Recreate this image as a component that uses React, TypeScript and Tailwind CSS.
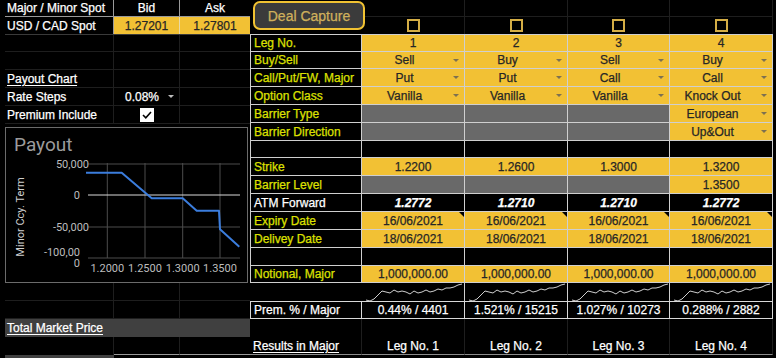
import React from 'react';

type Kind = 'y' | 'g' | 'b' | 'bi';
interface Cell {
    t?: string;
    k: Kind;
    dd?: boolean;
    corner?: boolean;
}
interface Row {
    label: string;
    white?: boolean;
    h: string;
    cells: Cell[];
}

const y = (t: string, dd = false, corner = false): Cell => ({ t, k: 'y', dd, corner });
const g: Cell = { k: 'g' };
const b: Cell = { k: 'b' };

const rows: Row[] = [
    { label: 'Leg No.', h: 'h-[18px]', cells: ['1', '2', '3', '4'].map((t) => y(t)) },
    { label: 'Buy/Sell', h: 'h-[17px]', cells: ['Sell', 'Buy', 'Sell', 'Buy'].map((t) => y(t, true)) },
    { label: 'Call/Put/FW, Major', h: 'h-[18px]', cells: ['Put', 'Put', 'Call', 'Call'].map((t) => y(t, true)) },
    { label: 'Option Class', h: 'h-[18px]', cells: ['Vanilla', 'Vanilla', 'Vanilla', 'Knock Out'].map((t) => y(t, true)) },
    { label: 'Barrier Type', h: 'h-[18px]', cells: [g, g, g, y('European', true)] },
    { label: 'Barrier Direction', h: 'h-[18px]', cells: [g, g, g, y('Up&Out', true)] },
    { label: '', h: 'h-[17px]', cells: [b, b, b, b] },
    { label: 'Strike', h: 'h-[18px]', cells: ['1.2200', '1.2600', '1.3000', '1.3200'].map((t) => y(t)) },
    { label: 'Barrier Level', h: 'h-[18px]', cells: [g, g, g, y('1.3500')] },
    { label: 'ATM Forward', white: true, h: 'h-[18px]', cells: ['1.2772', '1.2710', '1.2710', '1.2772'].map((t) => ({ t, k: 'bi' as Kind })) },
    { label: 'Expiry Date', h: 'h-[18px]', cells: [0, 1, 2, 3].map(() => y('16/06/2021', false, true)) },
    { label: 'Delivey Date', h: 'h-[18px]', cells: [0, 1, 2, 3].map(() => y('18/06/2021')) },
    { label: '', h: 'h-[18px]', cells: [b, b, b, b] },
    { label: 'Notional, Major', h: 'h-[17px]', cells: [0, 1, 2, 3].map(() => y('1,000,000.00')) },
];

const prem = ['0.44% / 4401', '1.521% / 15215', '1.027% / 10273', '0.288% / 2882'];

const spark =
    '4,16 8,17 12,15 16,11 20,7 24,8 28,9 32,6 36,8 40,7 44,8 48,10 52,7 56,9 60,8 64,6 68,8 72,7 76,5 80,6 84,4 88,4 92,3 96,1 100,0';

function Arrow({ light }: { light?: boolean }) {
    return (
        <div className="w-[17px] h-full flex items-center pl-[6px]">
            <div
                className={`w-0 h-0 border-l-[3px] border-r-[3px] border-t-[3px] border-l-transparent border-r-transparent ${light ? 'border-t-[#bdbdbd]' : 'border-t-[#7d7150]'}`}
            />
        </div>
    );
}

function LegCell({ c, first }: { c: Cell; first: boolean }) {
    const bg =
        c.k === 'y' ? 'bg-[#f2c134] text-[#262626]' : c.k === 'g' ? 'bg-[#696969]' : c.k === 'bi' ? 'bg-black text-white italic font-bold' : 'bg-black';
    return (
        <div className={`relative flex items-center border-r border-b border-[#cfcfcf] ${first ? 'border-t' : ''} ${bg}`}>
            <div className="flex-1 text-center whitespace-nowrap">{c.t}</div>
            {c.dd && <Arrow />}
            {c.corner && (
                <div className="absolute top-0 right-0 w-0 h-0 border-t-[5px] border-l-[5px] border-t-black border-l-transparent" />
            )}
        </div>
    );
}

function PayoutChart() {
    const vx = [102.3, 140, 177.7, 215];
    const hy = [37, 100, 131];
    return (
        <div className="mt-[3px] w-[243px] h-[156px] border border-[#6b6b6b] bg-black">
            <svg width="241" height="154" viewBox="1 1 241 154" className="font-['Roboto',sans-serif] [-webkit-text-stroke:0px]">
                <text x="9" y="24" fontSize="19" fill="#9c9c9c">Payout</text>
                <text x="0" y="0" fontSize="11" fill="#d0d0d0" textAnchor="middle" transform="translate(19 90) rotate(-90)">
                    Minor Ccy. Term
                </text>
                {hy.map((v) => (
                    <line key={v} x1="83" x2="235" y1={v} y2={v} stroke="#4d4d4d" strokeWidth="1" />
                ))}
                {vx.map((v) => (
                    <line key={v} x1={v} x2={v} y1="36" y2="131" stroke="#4d4d4d" strokeWidth="1" />
                ))}
                <line x1="83" x2="235" y1="68" y2="68" stroke="#d9d9d9" strokeWidth="1" />
                <g fontSize="11" fill="#bdbdbd" textAnchor="end">
                    <text x="84" y="41">50,000</text>
                    <text x="75" y="72">0</text>
                    <text x="84" y="104">-50,000</text>
                    <text x="75" y="128.5">-100,00</text>
                    <text x="75" y="140">0</text>
                </g>
                <g fontSize="11" fill="#bdbdbd" textAnchor="middle">
                    {['1.2000', '1.2500', '1.3000', '1.3500'].map((t, i) => (
                        <text key={t} x={vx[i]} y="144.5">{t}</text>
                    ))}
                </g>
                <polyline
                    points="81,45.7 116.7,45.7 146.7,71.3 177.7,71.3 191.7,83.7 214,83.7 215,102.3 234.3,119.7"
                    fill="none"
                    stroke="#3b7ddd"
                    strokeWidth="2"
                    strokeLinejoin="round"
                />
            </svg>
        </div>
    );
}

function LeftRow({ h, children }: { h: string; children?: React.ReactNode }) {
    return <div className={`flex ${h} border-b border-[#1e1e1e]`}>{children}</div>;
}

export default function App() {
    const cols = 'grid grid-cols-[112px_103px_103px_102px_103px]';
    return (
        <div className="w-[776px] h-[358px] overflow-hidden bg-black text-[12px] leading-none font-['Liberation_Sans',Arial,sans-serif] [-webkit-text-stroke:0.25px] flex">
            <div className="w-[5px]" />

            {/* left panel */}
            <div className="w-[245px] flex flex-col">
                <div className="flex h-[17px] border-b border-[#9a9a9a] text-white">
                    <div className="w-[109px] pl-[2px] flex items-center border-r border-[#9a9a9a]">Major / Minor Spot</div>
                    <div className="w-[66px] flex items-center justify-center border-r border-[#9a9a9a]">Bid</div>
                    <div className="w-[70px] flex items-center justify-center">Ask</div>
                </div>
                <div className="flex h-[18px] border-b border-[#3a3a3a]">
                    <div className="w-[109px] pl-[2px] flex items-center text-white border-r border-[#9a9a9a]">USD / CAD Spot</div>
                    <div className="w-[66px] flex items-center justify-center bg-[#f2c134] text-[#262626] border-r border-[#e8d9a8]">1.27201</div>
                    <div className="w-[70px] flex items-center justify-center bg-[#f2c134] text-[#262626]">1.27801</div>
                </div>
                {['h-[17px]', 'h-[18px]'].map((h, i) => (
                    <LeftRow key={i} h={h}>
                        <div className="w-[109px] border-r border-[#1e1e1e]" />
                        <div className="w-[66px] border-r border-[#1e1e1e]" />
                        <div className="w-[70px]" />
                    </LeftRow>
                ))}
                <LeftRow h="h-[18px]">
                    <div className="w-[109px] pl-[2px] flex items-center text-white underline underline-offset-2 border-r border-[#1e1e1e]">Payout Chart</div>
                    <div className="w-[66px] border-r border-[#1e1e1e]" />
                    <div className="w-[70px]" />
                </LeftRow>
                <LeftRow h="h-[18px]">
                    <div className="w-[109px] pl-[2px] flex items-center text-white border-r border-[#1e1e1e]">Rate Steps</div>
                    <div className="w-[66px] flex items-center text-white border-r border-[#1e1e1e]">
                        <div className="pl-[11px]">0.08%</div>
                        <div className="flex-1" />
                        <Arrow light />
                    </div>
                    <div className="w-[70px]" />
                </LeftRow>
                <LeftRow h="h-[18px]">
                    <div className="w-[109px] pl-[2px] flex items-center text-white border-r border-[#1e1e1e]">Premium Include</div>
                    <div className="w-[66px] flex items-center justify-center border-r border-[#1e1e1e]">
                        <div className="w-[14px] h-[14px] bg-white flex items-center justify-center">
                            <svg width="10" height="8" viewBox="0 0 10 8">
                                <polyline points="1,4 3.8,6.8 9,1" fill="none" stroke="#000" strokeWidth="1.6" />
                            </svg>
                        </div>
                    </div>
                    <div className="w-[70px]" />
                </LeftRow>

                <PayoutChart />

                {[0, 1].map((i) => (
                    <LeftRow key={i} h="h-[18px]">
                        <div className="w-[109px] border-r border-[#1e1e1e]" />
                        <div className="w-[66px] border-r border-[#1e1e1e]" />
                        <div className="w-[70px]" />
                    </LeftRow>
                ))}
                <div className="h-[18px] bg-[#404040] pl-[2px] flex items-center text-white">
                    <span className="underline underline-offset-2">Total Market Price</span>
                </div>
                <div className="flex h-[18px]">
                    <div className="w-[109px] border-r border-[#1e1e1e]" />
                    <div className="w-[66px] border-r border-b border-[#1e1e1e] border-b-[#9a9a9a]" />
                    <div className="w-[70px] border-b border-[#9a9a9a]" />
                </div>
                <div className="flex h-[3px]">
                    <div className="w-[109px] bg-[#404040]" />
                </div>
            </div>

            {/* right panel */}
            <div className="w-[523px] flex flex-col">
                <div className={`${cols} h-[34px]`}>
                    <div className="relative z-10">
                        <button className="ml-[3px] mt-[1px] w-[112px] h-[29px] rounded-[7px] border-2 border-[#f1c232] bg-[#3b3b3b] text-[#cfb05c] text-[14px] font-['Liberation_Sans',Arial,sans-serif]">
                            Deal Capture
                        </button>
                    </div>
                    {[0, 1, 2, 3].map((i) => (
                        <div key={i} className="flex flex-col border-r border-[#1e1e1e]">
                            <div className="h-[17px] border-b border-[#1e1e1e]" />
                            <div className="flex-1 flex items-end justify-center pb-[2px]">
                                <div className="w-[13px] h-[13px] border-2 border-[#d4ad45]" />
                            </div>
                        </div>
                    ))}
                </div>

                {rows.map((r, ri) => (
                    <div key={ri} className={`${cols} ${r.h}`}>
                        <div
                            className={`flex items-center pl-[3px] whitespace-nowrap border-l border-r border-b border-[#cfcfcf] ${ri === 0 ? 'border-t' : ''} ${r.white ? 'text-white' : 'text-[#dde000]'}`}
                        >
                            {r.label}
                        </div>
                        {r.cells.map((c, ci) => (
                            <LegCell key={ci} c={c} first={ri === 0} />
                        ))}
                    </div>
                ))}

                {/* sparkline row */}
                <div className={`${cols} h-[18px]`}>
                    <div />
                    {[0, 1, 2, 3].map((i) => (
                        <div key={i} className="border-r border-[#cfcfcf]">
                            <svg width="102" height="18" viewBox="0 -1 102 18" className="overflow-visible">
                                <polyline points={spark} fill="none" stroke="#cfcfcf" strokeWidth="1" />
                            </svg>
                        </div>
                    ))}
                </div>

                <div className={`${cols} h-[18px] text-white`}>
                    <div className="flex items-center pl-[3px] border border-[#d9d9d9]">Prem. % / Major</div>
                    {prem.map((p) => (
                        <div key={p} className="flex items-center justify-center border-t border-r border-b border-[#d9d9d9]">
                            {p}
                        </div>
                    ))}
                </div>

                <div className={`${cols} h-[18px]`}>
                    {[0, 1, 2, 3, 4].map((i) => (
                        <div key={i} className="border-r border-[#1e1e1e]" />
                    ))}
                </div>

                <div className={`${cols} h-[18px] text-white`}>
                    <div className="flex items-center pl-[3px] border-b border-r border-[#1e1e1e] border-b-[#8c8c8c]">
                        <span className="underline underline-offset-2">Results in Major</span>
                    </div>
                    {[1, 2, 3, 4].map((n) => (
                        <div key={n} className="flex items-center justify-center border-r border-b border-[#1e1e1e] border-b-[#8c8c8c]">
                            Leg No. {n}
                        </div>
                    ))}
                </div>
            </div>
        </div>
    );
}
